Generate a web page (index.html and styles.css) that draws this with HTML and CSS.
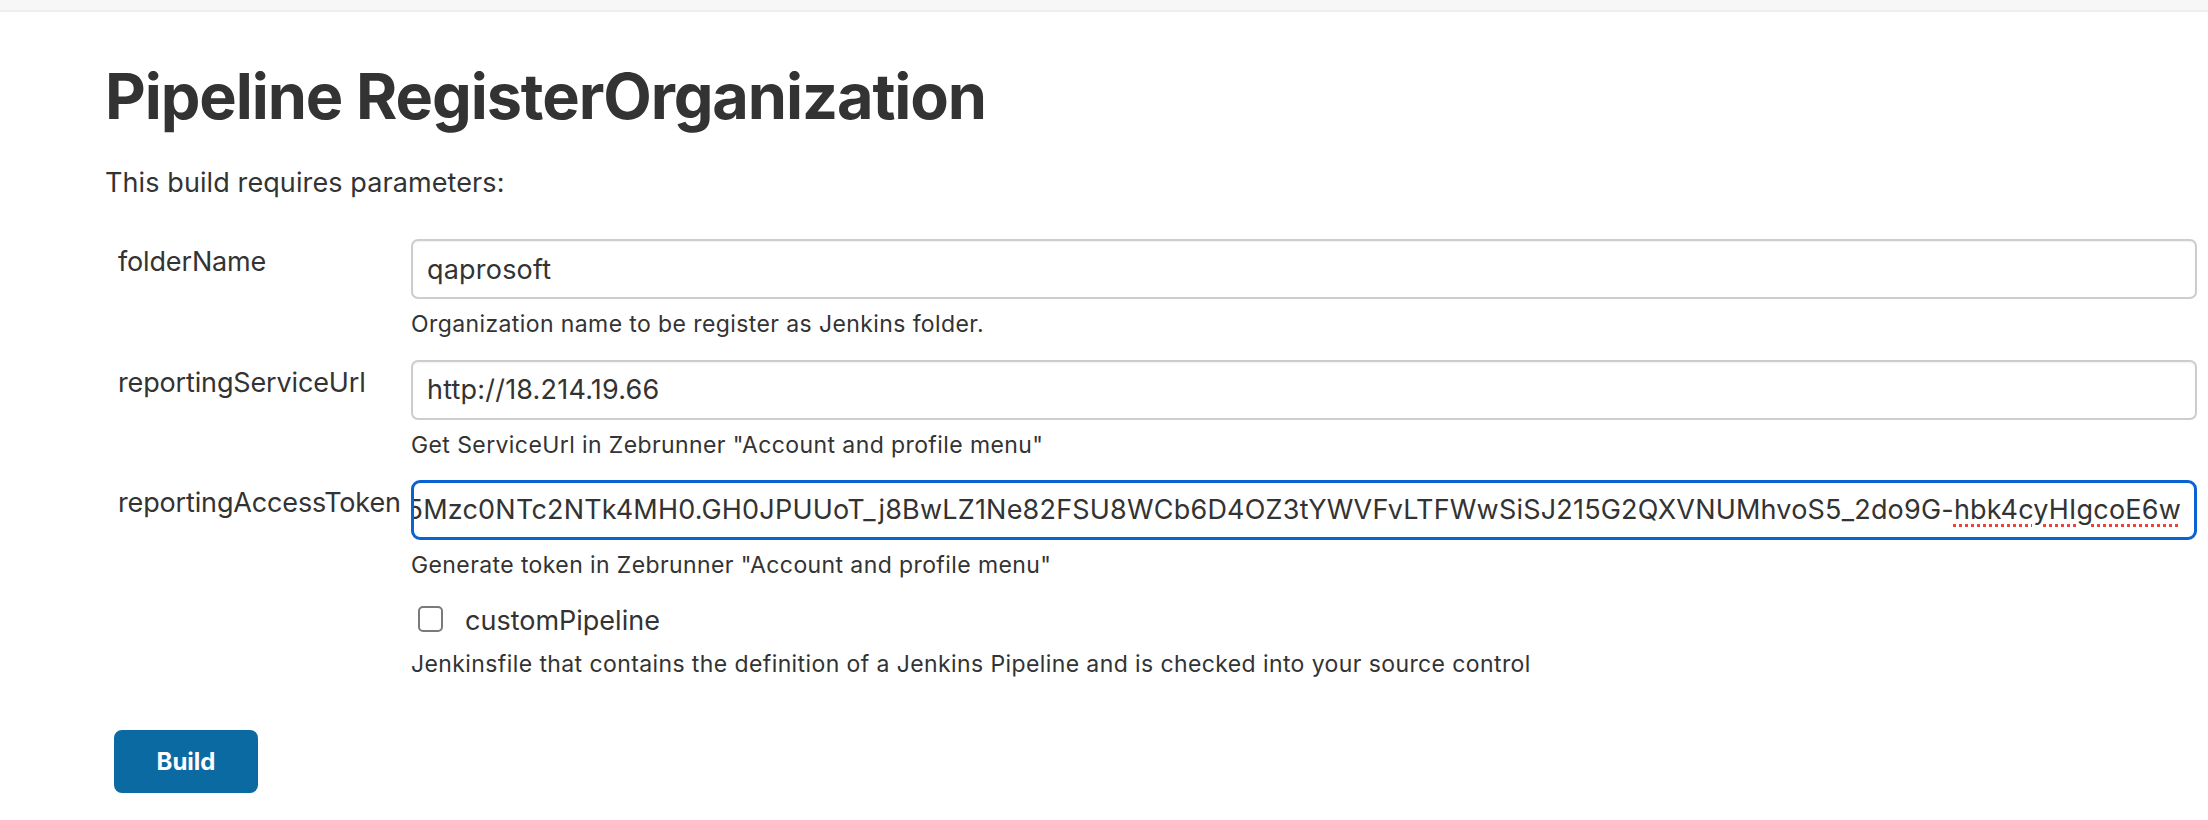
FILE: index.html
```html
<!DOCTYPE html>
<html lang="en">
<head>
<meta charset="utf-8">
<title>Pipeline RegisterOrganization</title>
<link rel="stylesheet" href="styles.css">
</head>
<body>
<div class="topbar"></div>
<main class="page">
  <h1 class="title">Pipeline RegisterOrganization</h1>
  <p class="intro">This build requires parameters:</p>
  <form class="params">
    <div class="param">
      <label class="param-label" for="f1">folderName</label>
      <div class="param-body">
        <input id="f1" class="field" type="text" value="qaprosoft">
        <div class="desc">Organization name to be register as Jenkins folder.</div>
      </div>
    </div>
    <div class="param">
      <label class="param-label" for="f2">reportingServiceUrl</label>
      <div class="param-body">
        <input id="f2" class="field" type="text" value="http://18.214.19.66">
        <div class="desc">Get ServiceUrl in Zebrunner "Account and profile menu"</div>
      </div>
    </div>
    <div class="param">
      <label class="param-label">reportingAccessToken</label>
      <div class="param-body">
        <div class="field field-focused"><span class="field-text">eyJhbGciOiJIUzUxMiJ9.eyJ1c2VySWQiOjEsImV4cCI6MTY5NjU5Mzc0NTc2NTk4MH0.GH0JPUUoT_j8BwLZ1Ne82FSU8WCb6D4OZ3tYWVFvLTFWwSiSJ215G2QXVNUMhvoS5_2do9G-<span class="misspelled">hbk4cyHIgcoE6w</span></span></div>
        <div class="desc">Generate token in Zebrunner "Account and profile menu"</div>
      </div>
    </div>
    <div class="param">
      <div class="param-label"></div>
      <div class="param-body">
        <label class="check-row"><input class="checkbox" type="checkbox"><span>customPipeline</span></label>
        <div class="desc desc-check">Jenkinsfile that contains the definition of a Jenkins Pipeline and is checked into your source control</div>
      </div>
    </div>
    <div class="actions">
      <button type="button" class="build-btn">Build</button>
    </div>
  </form>
</main>
</body>
</html>
```

FILE: styles.css
```css
html, body {
  margin: 0;
  padding: 0;
  background: #fff;
}
body {
  font-family: Inter, "Noto Sans", "Liberation Sans", sans-serif;
  color: #333;
}
.topbar {
  height: 10px;
  background: #f7f7f8;
  border-bottom: 2px solid #eaeef1;
}
.page {
  padding: 0 11px 0 105px;
}
.title {
  margin: 47px 0 0 0;
  font-size: 63px;
  line-height: 1.2;
  font-weight: 700;
  letter-spacing: -1.1px;
  color: #333;
}
.intro {
  margin: 29px 0 0 0;
  font-size: 27px;
  line-height: 1.4;
  letter-spacing: 0.1px;
}
.params {
  margin-top: 38px;
}
.param {
  display: grid;
  grid-template-columns: 293px 1fr;
  padding-left: 13px;
}
.param-label {
  font-size: 27px;
  line-height: 1.4;
  letter-spacing: -0.15px;
  padding-top: 4px;
  white-space: nowrap;
}
.param-body {
  display: flex;
  flex-direction: column;
  min-width: 0;
}
.field {
  box-sizing: border-box;
  height: 60px;
  width: 100%;
  margin: 0;
  padding: 0 14px 0 14px;
  border: 2px solid #cdcdcd;
  border-radius: 7px;
  box-shadow: inset 0 1px 2px rgba(0,0,0,0.06);
  font-family: Inter, "Noto Sans", "Liberation Sans", sans-serif;
  font-size: 27px;
  letter-spacing: 0.2px;
  color: #333;
  background: #fff;
  outline: none;
}
.field-focused {
  display: flex;
  align-items: center;
  justify-content: flex-end;
  overflow: hidden;
  white-space: nowrap;
  border: 3px solid #0b62d2;
  border-radius: 9px;
  padding: 0 13px 0 12px;
  box-shadow: none;
}
.field-text {
  flex: none;
}
.misspelled {
  text-decoration: underline dotted #f0403a;
  text-decoration-thickness: 3px;
  text-underline-offset: 5px;
}
.desc {
  margin: 9px 0 19px 0;
  font-size: 23px;
  line-height: 1.4;
  letter-spacing: 0.4px;
  white-space: nowrap;
}
.desc-check {
  margin: 8px 0 0 0;
}
.check-row {
  display: flex;
  align-items: flex-start;
  gap: 22px;
  font-size: 27px;
  line-height: 1.4;
  padding-top: 2px;
  padding-left: 7px;
}
.checkbox {
  appearance: none;
  -webkit-appearance: none;
  box-sizing: border-box;
  width: 25px;
  height: 26px;
  margin: 4px 0 0 0;
  border: 2px solid #7a7a7a;
  border-radius: 5px;
  background: #fff;
}
.actions {
  padding: 50px 0 0 9px;
}
.build-btn {
  width: 144px;
  height: 63px;
  border: none;
  border-radius: 8px;
  background: #0b6aa2;
  color: #fff;
  font-family: Inter, "Noto Sans", "Liberation Sans", sans-serif;
  font-size: 24px;
  font-weight: 700;
  cursor: pointer;
}
```
